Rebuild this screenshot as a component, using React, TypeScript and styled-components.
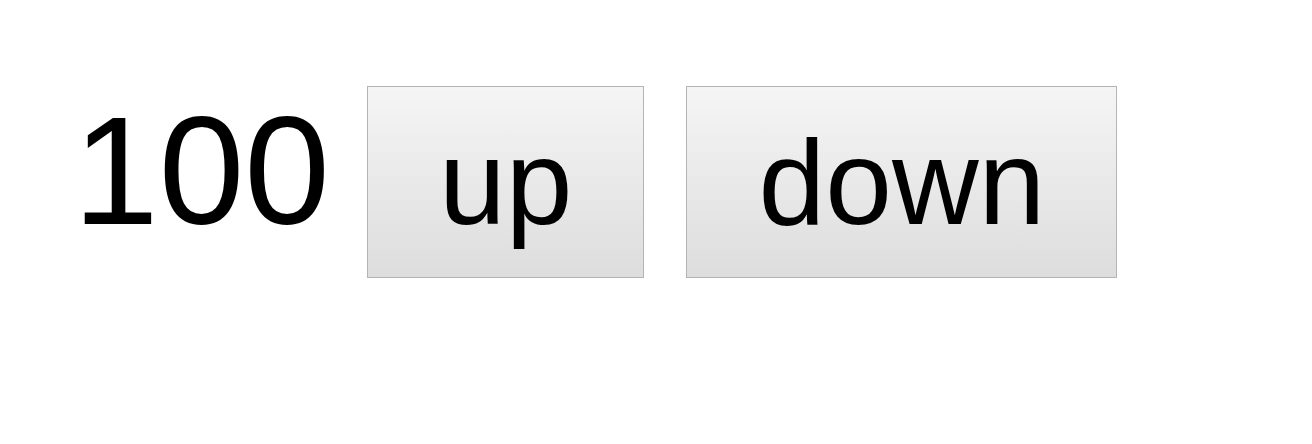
import React, { useState } from "react";
import styled, { createGlobalStyle } from "styled-components";

const Global = createGlobalStyle`
  html, body { margin: 0; padding: 0; background: #ffffff; }
  body { font-family: "Liberation Sans", Arial, sans-serif; }
`;

const Row = styled.div`
  display: flex;
  align-items: baseline;
  padding: 83px 0 0 73px;
  font-family: "Liberation Sans", Arial, sans-serif;
`;

const Count = styled.span`
  font-size: 154px;
  line-height: normal;
  color: #000;
  margin-right: 37px;
`;

const Btn = styled.button<{ $gap?: number }>`
  font-family: "Liberation Sans", Arial, sans-serif;
  font-size: 120px;
  line-height: normal;
  color: #000;
  padding: 26px 71px;
  margin: 0 ${(p) => p.$gap ?? 0}px 0 0;
  border: 1px solid #b4b4b4;
  border-radius: 0;
  background: linear-gradient(to bottom, #f5f5f5 0%, #dddddd 100%);
  cursor: pointer;
`;

export default function App() {
  const [n, setN] = useState(100);
  return (
    <>
      <Global />
      <Row>
        <Count>{n}</Count>
        <Btn $gap={42} onClick={() => setN(n + 1)}>up</Btn>
        <Btn onClick={() => setN(n - 1)}>down</Btn>
      </Row>
    </>
  );
}
